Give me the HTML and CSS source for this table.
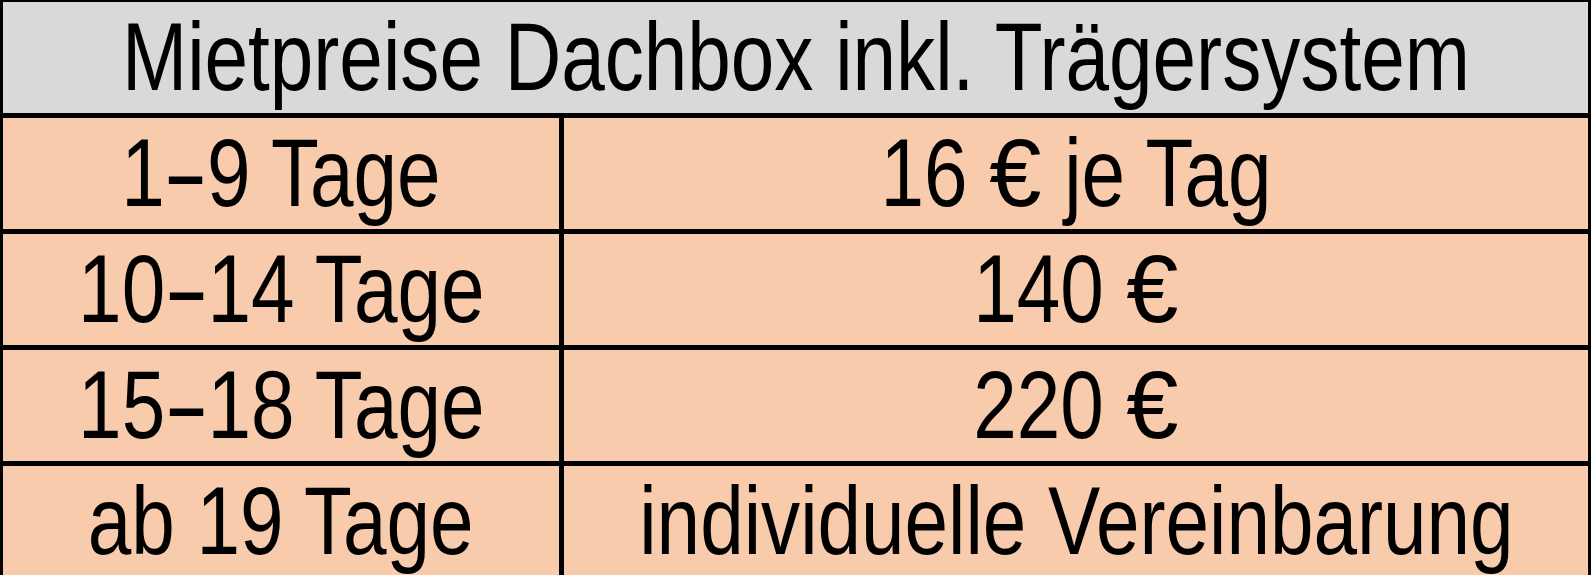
FILE: index.html
```html
<!DOCTYPE html>
<html lang="de">
<head>
<meta charset="utf-8">
<title>Mietpreise Dachbox</title>
<link rel="stylesheet" href="styles.css">
</head>
<body>
<div class="price-table">
  <div class="cell head"><span class="txt">Mietpreise Dachbox inkl. Trägersystem</span></div>
  <div class="cell"><span class="txt">1<span class="dash">-</span>9 Tage</span></div>
  <div class="cell"><span class="txt">16 <span class="eur">€</span> je Tag</span></div>
  <div class="cell"><span class="txt">10<span class="dash">-</span>14 Tage</span></div>
  <div class="cell"><span class="txt">140 <span class="eur">€</span></span></div>
  <div class="cell"><span class="txt">15<span class="dash">-</span>18 Tage</span></div>
  <div class="cell"><span class="txt">220 <span class="eur">€</span></span></div>
  <div class="cell"><span class="txt">ab 19 Tage</span></div>
  <div class="cell"><span class="txt">individuelle Vereinbarung</span></div>
</div>
</body>
</html>
```

FILE: styles.css
```css
html, body {
  margin: 0;
  padding: 0;
  background: #ffffff;
  overflow: hidden;
  height: 575px;
}

.price-table {
  display: grid;
  grid-template-columns: 556px 1fr;
  grid-auto-rows: 111px;
  gap: 5px;
  background: #000000;
  border-top: 2px solid #000000;
  border-left: 3px solid #000000;
  border-right: 3px solid #000000;
  font-family: "Liberation Sans", Arial, sans-serif;
  font-size: 96px;
  color: #000000;
}

.cell {
  background: #f8cbad;
  display: flex;
  align-items: center;
  justify-content: center;
  white-space: nowrap;
  line-height: 1;
  min-width: 0;
}

.head {
  grid-column: 1 / span 2;
  background: #d9d9d9;
}

.txt {
  display: inline-block;
  transform: scaleX(0.815);
  transform-origin: center;
  margin-top: -2px;
}

.dash {
  display: inline-block;
  transform: scaleX(1.75);
  margin: 0 10px;
}

.eur {
  display: inline-block;
  transform: scaleX(1.2);
  margin: 0 6px;
}
```
